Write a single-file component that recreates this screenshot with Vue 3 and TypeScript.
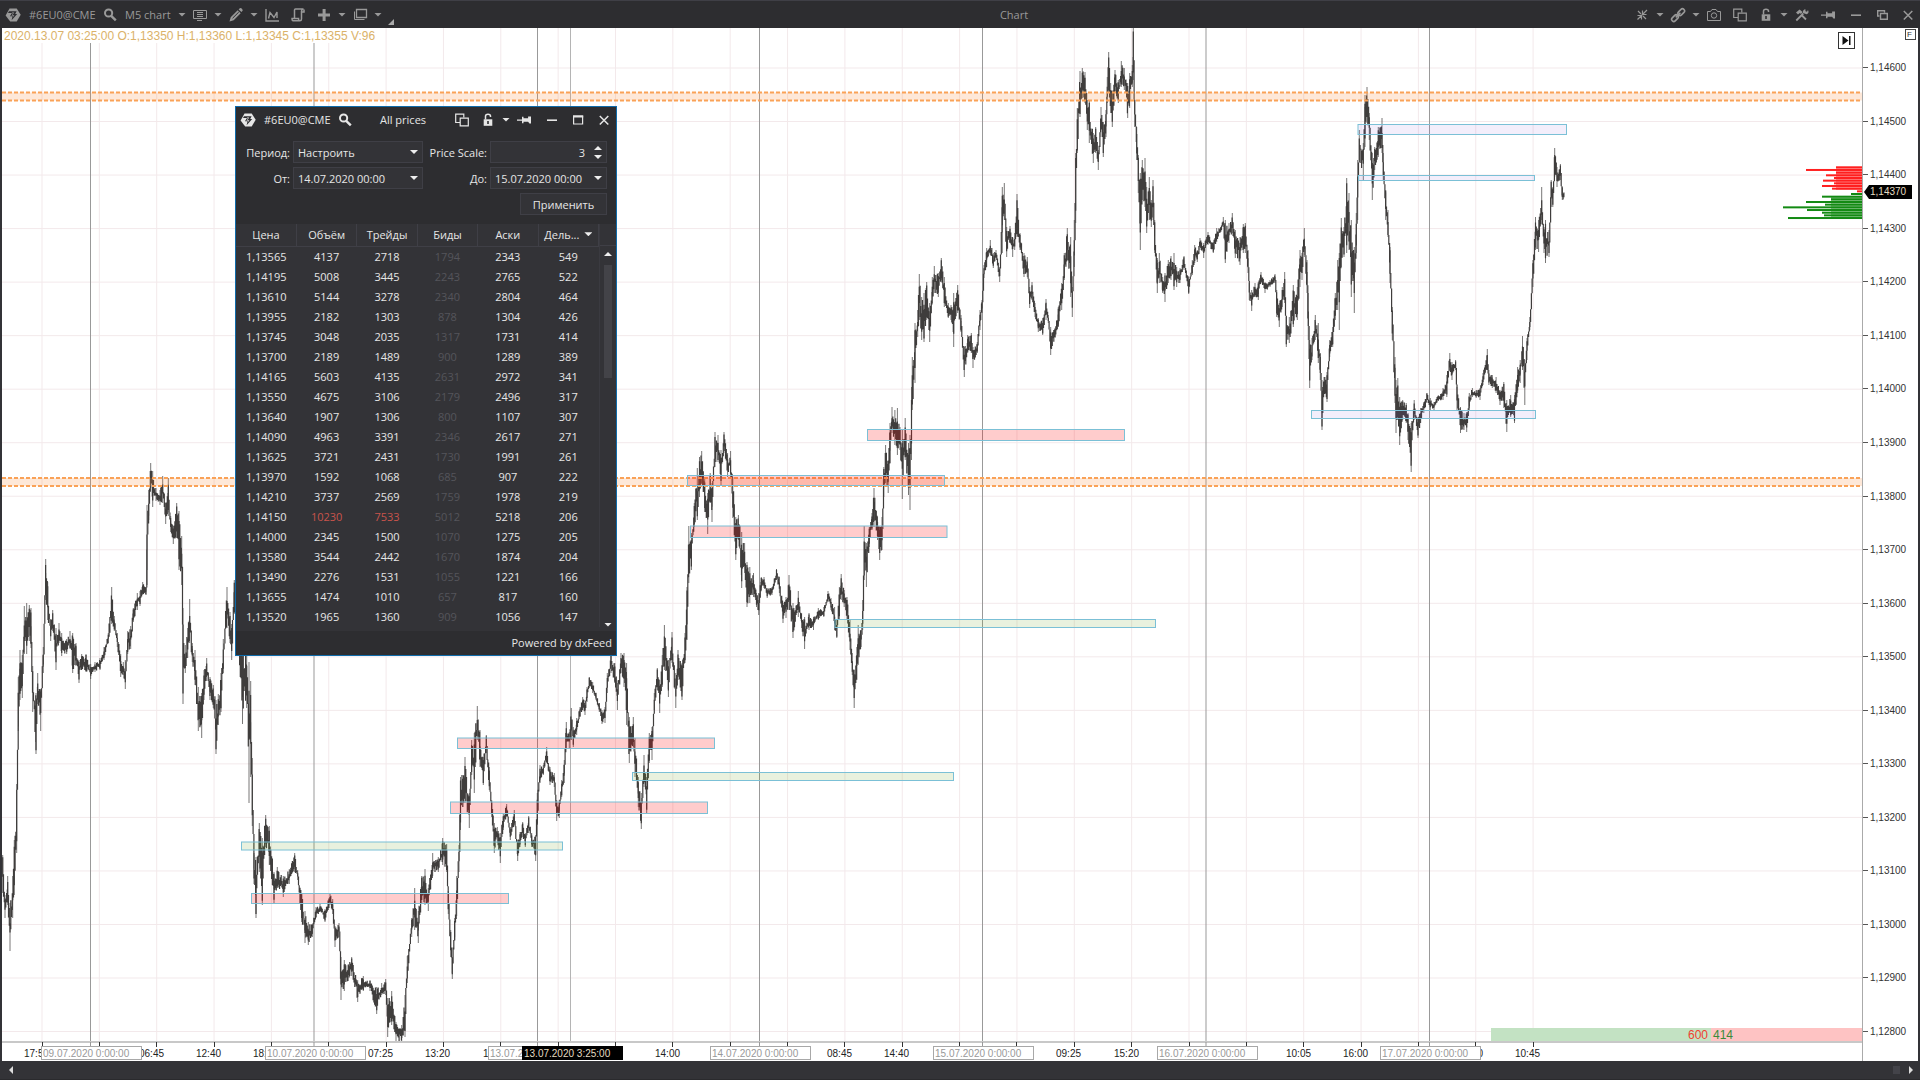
<script setup lang="ts">
import { ref } from 'vue'

type Rect = { x1: number; x2: number; y1: number; y2: number; kind: string }

const glyphs: Record<string, string> = {
  logo: '<path fill="currentColor" d="M4.5 1.5h7.2l4 6.2-4 6.8H5.2L.6 8.4z"/><path fill="#2d2d30" d="M4 4.200h7.600L10.200 7h2l-5.600 6.200.9-4H5L6.900 6H3z"/><path fill="currentColor" d="M7.200 5.400h2L7.400 8.200h2l-1.600 2 .3-1.500H6.400l1.700-2.400H6.600z"/>',
  search: '<circle cx="6.6" cy="6" r="3.6" fill="none" stroke="currentColor" stroke-width="2"/><path d="M9.2 8.8l4.600 4.600" stroke="currentColor" stroke-width="2.400"/>',
  note: '<path fill="none" stroke="currentColor" d="M1.500 3.500h13v8h-13zM5 13.500h5"/><path stroke="currentColor" d="M5 5.500h6M5 7.500h6M5 9.500h6"/>',
  pencil: '<path fill="currentColor" d="M1.500 14.500l1.200-4.200 7-7 3 3-7 7zM10.600 2.400l1.200-1.100q1-.6 1.900.3l.7.8q.7.900 0 1.700l-1 1z"/><path stroke="#2d2d30" d="M4.600 11.200l6.200-6.200"/>',
  indicator: '<path fill="none" stroke="currentColor" stroke-width="1.400" d="M2 2v12h13M4.500 11.500L6 5.500l4 5 3-5.500v6"/>',
  script: '<path fill="none" stroke="currentColor" stroke-width="1.500" d="M4.500 11V3q0-1 1-1h8q-2 .3-2 2v8q0 1.800-1.600 1.800H3q-1.200-.6-1-2.300h6.500q-.2 1.800 1 2.300M11.500 5h2.500V2.500"/>',
  plus: '<path fill="currentColor" d="M6.600 2h3v4.500h4.400v3H9.600V14h-3V9.500H2v-3h4.600z"/>',
  stack: '<path fill="none" stroke="currentColor" stroke-width="1.300" d="M4.500 2.500h10v8h-10z"/><path fill="none" stroke="currentColor" d="M2.500 4.500v8h10"/>',
  collapse: '<path fill="none" stroke="currentColor" stroke-width="1.200" d="M3.500 12.500l9.500-9.500M8.500 3.500v4h4M7.500 12.500v-4h-4M4 4l3 3M9 9l3 3"/>',
  link: '<g fill="none" stroke="currentColor" stroke-width="1.600"><rect x="7.500" y="3" width="7.500" height="4.200" rx="2" transform="rotate(-45 11.250 5.100)"/><rect x="1.200" y="9" width="7.500" height="4.200" rx="2" transform="rotate(-45 5 11.100)"/><path d="M5.800 10.400l4.600-4.600"/></g>',
  camera: '<path fill="none" stroke="currentColor" d="M1.500 4.500h3l1.500-2h4l1.500 2h3v9h-13z"/><circle cx="8" cy="8.500" r="2.700" fill="none" stroke="currentColor"/>',
  copy: '<path fill="none" stroke="currentColor" stroke-width="1.200" d="M6 10.500H1.700V2.200h8.100v3.300"/><path fill="none" stroke="currentColor" stroke-width="1.200" d="M6.200 6.200h8.100v7.600H6.200z"/>',
  lock: '<path fill="currentColor" d="M3.700 7.300h8.600v6.500H3.700z"/><path fill="none" stroke="currentColor" stroke-width="1.500" d="M5.500 7.500V4.200q0-2 2.500-2t2.500 2v.8"/><path stroke="#2d2d30" stroke-width="1.600" d="M8 9v3"/>',
  tools: '<path stroke="currentColor" stroke-width="1.800" d="M2.300 13.500l7-7M12 12.500L7.500 8"/><path fill="currentColor" d="M2 5.500l3.600-3 3 2.500-1.600 2-1.200-1L4 7.600zM9 6q-.6-3 2.300-4l.2 2.300 1.500.4 1-1.700q1.600 3-1.300 4.200z"/>',
  pin: '<path fill="currentColor" d="M1 7.400h5V4.800h1.500v1.400h4.600V4.400H15v7.200h-1.600l-1.300-1.800H7.500v1.400H6V8.700H1z"/>',
  min: '<path stroke="currentColor" stroke-width="1.600" d="M3 8.200h10"/>',
  restore: '<path fill="none" stroke="currentColor" stroke-width="1.400" d="M6.500 6.500h6.800v5.800H6.500z"/><path fill="none" stroke="currentColor" stroke-width="1.400" d="M5.500 9H3.700V3.700h6.800v2"/>',
  max: '<path fill="none" stroke="currentColor" stroke-width="1.200" d="M3.600 4h9v8h-9z"/><path stroke="currentColor" stroke-width="2" d="M3 4.500h10.200"/>',
  close: '<path stroke="currentColor" stroke-width="1.500" d="M3.800 4l8.500 8.500M12.300 4l-8.500 8.500"/>',
}

const leftTools = ['caret', 'note', 'caret', 'pencil', 'caret', 'indicator', 'script', 'plus', 'caret', 'stack', 'caret']
const rightTools = ['collapse', 'caret', 'link', 'caret', 'camera', 'copy', 'lock', 'caret', 'tools', 'pin', 'min', 'restore', 'close']
const dialogTools = ['copy', 'lock', 'caret', 'pin', 'min', 'max', 'close']

const prices = Array.from({ length: 19 }, (_, i) => '1,' + (14600 - i * 100))
const gridY = prices.map((_, i) => 68 + i * 53.53)
const gridX = Array.from({ length: 27 }, (_, i) => 42 + i * 57.35)
const days = [
  { x: 90.5, text: '09.07.2020 0:00:00' },
  { x: 314, text: '10.07.2020 0:00:00' },
  { x: 537.5, text: '13.07.2020 0:00:00' },
  { x: 759.5, text: '14.07.2020 0:00:00' },
  { x: 982.5, text: '15.07.2020 0:00:00' },
  { x: 1206, text: '16.07.2020 0:00:00' },
  { x: 1429.5, text: '17.07.2020 0:00:00' },
]
const hours = [
  { x: 42, text: '17:50' }, { x: 157, text: '06:45' }, { x: 214, text: '12:40' }, { x: 271, text: '18:35' },
  { x: 386, text: '07:25' }, { x: 443, text: '13:20' }, { x: 501, text: '19:15' }, { x: 673, text: '14:00' },
  { x: 845, text: '08:45' }, { x: 902, text: '14:40' }, { x: 1074, text: '09:25' }, { x: 1132, text: '15:20' },
  { x: 1304, text: '10:05' }, { x: 1361, text: '16:00' }, { x: 1476, text: '04:50' }, { x: 1533, text: '10:45' },
]
const at = (x: number) => ({ left: ((x - 2) / 18.6).toFixed(3) + '%' })

const zones: Rect[] = [
  { x1: 457.5, x2: 714.5, y1: 738, y2: 748.5, kind: 'red' },
  { x1: 450.5, x2: 707.5, y1: 802, y2: 813.5, kind: 'red' },
  { x1: 251.5, x2: 508.5, y1: 893.5, y2: 903.5, kind: 'red' },
  { x1: 867.5, x2: 1124.5, y1: 429.5, y2: 440.5, kind: 'red' },
  { x1: 687.5, x2: 944.5, y1: 475.5, y2: 485.5, kind: 'red' },
  { x1: 690.5, x2: 947, y1: 526, y2: 537.5, kind: 'red' },
  { x1: 241.5, x2: 562.5, y1: 842, y2: 850, kind: 'green' },
  { x1: 632.5, x2: 953.5, y1: 772.5, y2: 780.5, kind: 'green' },
  { x1: 835, x2: 1155.5, y1: 619.5, y2: 627.5, kind: 'green' },
  { x1: 1358, x2: 1566.5, y1: 124.5, y2: 134.5, kind: 'violet' },
  { x1: 1358.5, x2: 1534.5, y1: 175.5, y2: 180.5, kind: 'violet' },
  { x1: 1311.5, x2: 1535.5, y1: 410.5, y2: 418.5, kind: 'violet' },
]
const bands = [{ y1: 92.5, y2: 100.5 }, { y1: 478, y2: 486 }]

// Order book depth: left end of every level, from the top ask to the lowest bid.
const asks = [1836, 1806, 1836, 1826, 1834, 1823, 1834, 1822, 1832, 1857]
const bids = [1851, 1822, 1831, 1806, 1825, 1783, 1807, 1822, 1824, 1788]
const depth = [...asks, ...bids].map((x, i) => ({ x, y: 166.3 + i * 2.67, ask: i < 10 }))

// Price range samples: x, high, low.
const samples = `
2.7,855,893 5,895,918 7.7,876,905 10,903,951 12.7,876,918 14.3,840,895 16.7,784,853 18.3,677,731 20,650,700 22.3,655,698
24.3,606,654 26.7,603,654 29.3,605,641 31,608,648 32.7,666,712 36,693,754 37.7,673,704 40.7,689,731 43.3,647,673 45.7,559,600
47.7,582,620 50.7,620,641 52.7,610,631 56,628,670 59,623,643 61.7,633,656 66.7,639,654 70,631,649 72.7,633,673 76,643,666
79,660,683 81.7,654,670 86,654,672 90.7,664,679 95,662,672 100,658,670 104,647,660 108.3,633,643 111.7,587,624 114.3,616,631
117.3,633,647 120.7,654,677 123.3,662,675 125.3,660,689 127.7,631,654 130.7,626,649 133.3,608,622 137.3,593,610 140,591,606 142.7,582,595
146,587,595 147,505,585 148.7,490,520 150.7,463,488 152.7,471,507 156,488,501 160,490,505 162.7,476,503 165.7,503,524 168.3,478,516
170.7,516,532 173.3,526,544 176.7,503,538 179,511,570 181.7,536,585 183,608,704 185.3,645,673 187.7,628,658 189.7,599,643 192.3,643,662
195,650,685 198.3,687,731 201.7,693,738 204,670,700 206.7,658,681 210,677,700 213.3,685,708 216,700,754 218.3,694,725 221,673,712
223.3,639,673 227,587,628 230,612,643 231.7,624,660 234.3,580,612 238,590,640 242.5,640,724 246.7,648,708 249,662,803 250.7,681,777
252.3,758,826 254,853,884 256,857,918 259.3,823,872 262.3,838,905 265.7,815,847 269.3,826,865 274,872,903 277.3,867,888 283.3,876,897
289.3,869,884 294.7,853,872 297.7,870,880 301.7,893,922 305,911,943 308.3,922,945 312.3,924,937 316,907,918 320,904,912 325,909,922
330,893,905 332.7,899,914 335,926,947 339,923,937 341,957,1000 344.3,960,991 348.3,964,981 351.7,957,976 357.7,980,1002 363.3,976,991
370,980,991 376.7,987,1014 381.7,983,995 385.7,979,995 387.7,998,1037 391.7,991,1025 396,1022,1042 401.7,1025,1042 405,995,1037 407.3,956,983
411.7,918,937 414.7,888,930 418.3,911,943 421.7,876,903 425,869,905 428.3,888,911 432.7,853,876 438.3,857,872 442.7,838,865 446.7,844,872
448.3,891,914 450.7,930,957 452.3,957,979 454.7,918,941 456.7,876,916 459,845,872 460.5,777,830 465,757,803 469.3,793,828 471.7,740,775
474.3,733,793 477.3,706,740 480,730,767 483.3,757,785 486.3,735,753 489.3,767,790 491.7,800,817 494.3,823,853 497.3,827,843 500.3,833,863
503.3,813,830 506.7,804,817 510.3,827,840 514.3,810,825 517.7,840,861 520,832,847 522.7,822,837 525.3,833,847 528.7,816,833 531.7,833,847
535.7,835,861 537.3,793,825 540,765,783 543.3,765,775 546.7,747,763 550,767,785 554.3,773,787 556.7,800,821 559.3,800,818 561.7,780,797
564.3,760,783 566.3,722,748 569.3,732,748 571.3,708,740 573.3,727,747 576.7,718,735 580,707,717 582.7,697,710 585,700,715 587,687,702
589.3,677,688 592.7,682,693 596,693,700 599.3,703,712 602,710,724 605,707,723 607.3,673,693 611,653,673 614.8,663,683 617.4,683,710
621,653,673 624,653,687 626.6,663,725 629.3,717,763 633.3,717,747 635,738,777 638.3,777,807 641.3,793,829 644,755,787 646.7,777,813
649.3,733,763 652,727,760 654.3,693,710 657.3,668,690 659.7,680,713 662.3,655,687 664.4,625,670 668.4,660,697 672,632,663 675.8,673,708
678,650,680 682,663,700 685,633,663 687,587,640 688.8,526,583 691.4,533,570 694.3,503,527 697.3,468,520 699.5,457,497 701.7,451,483
704.7,477,512 707.7,493,534 710.2,473,503 712,483,522 715,432,467 718,435,462 721,450,485 724,432,453 727.6,453,477 730.6,451,477
732.8,477,518 735.8,517,560 738.4,515,540 741.7,532,588 744.6,543,573 747,562,607 749.8,567,603 753.5,573,597 756.5,593,607 758.7,593,615
761.3,577,590 764,577,588 767.2,588,598 772,587,595 776.5,569,580 779.4,577,593 783,603,623 786,597,618 789,575,610 793,603,638
798.3,591,617 801.6,613,628 804.6,617,649 809,613,630 813.5,617,630 818.3,608,620 823.8,607,617 828,591,602 831,598,610 834.6,607,630
836.8,620,638 839.4,587,620 841.2,574,600 844.2,590,607 847,597,620 850,620,650 852.3,653,675 854.2,670,708 856.8,647,680 858.2,625,665
861.2,630,647 862.7,600,630 864.2,526,580 866.4,543,587 869.3,527,547 872,513,530 874,488,527 877.5,517,540 879.7,527,560 882,517,550
883.8,467,497 885.6,445,483 888.2,460,493 890,423,463 892,407,433 894.9,410,445 897.4,408,455 900,427,450 902.3,430,499 905.2,418,460
908.5,443,495 910,435,510 911.5,387,460 912.3,357,410 915,323,383 917.7,310,337 919.3,274,320 921.7,297,340 924,293,342 926.7,282,320
929.7,303,342 932.3,277,303 934.3,266,293 938.3,273,297 941.3,258,280 944.3,277,307 948.3,303,318 951,305,320 953.7,293,347 957.7,285,313
961,315,332 964.3,347,377 967.7,335,353 971.3,333,353 973,347,368 977.3,342,353 980,310,330 982,300,313 984,265,278 986.7,248,267
990.3,240,255 993.3,253,268 996,250,258 999.7,267,282 1002.3,187,253 1004.3,183,220 1006.7,227,257 1010,226,243 1012.7,237,257 1014.7,233,250
1017,194,237 1020,233,250 1024,253,277 1027.3,257,277 1029.7,287,308 1032,282,300 1035,303,317 1038.3,318,332 1042.7,318,335 1046,299,320
1048.3,315,323 1050.7,327,355 1055,328,338 1058.3,307,327 1061.7,283,310 1064.3,253,280 1067.3,228,260 1070.7,237,297 1072.3,287,317 1074.3,220,267
1075.7,153,223 1077.3,108,153 1080,71,117 1082.3,68,98 1085,72,103 1087.3,100,130 1089.3,100,143 1093.3,133,163 1095.7,127,153 1098.3,150,170
1101,107,137 1103.3,122,157 1106,110,137 1107.3,77,103 1108.7,52,93 1110.7,83,113 1112.3,93,127 1115,70,93 1118.3,80,103 1121.3,61,87
1124.3,68,90 1127.7,83,118 1129.7,73,108 1132.3,65,87 1133.3,28,80 1134.7,100,127 1136.7,127,160 1138.3,155,193 1140.3,173,250 1142.3,160,200
1145,158,207 1146.7,187,233 1149.3,177,220 1151.3,200,227 1153,180,220 1154.7,220,253 1157.3,260,293 1159.3,253,283 1162.7,277,293 1165,273,302
1168.3,260,283 1171,256,280 1174,253,290 1176.7,267,287 1180,268,283 1184,256,270 1188.7,277,294 1192.3,260,275 1194.7,245,263 1197.3,250,262
1200,238,250 1203.7,243,258 1208,232,245 1213.3,242,253 1216.7,228,242 1220.7,227,232 1223.3,217,227 1225.3,220,263 1229,223,243 1232.3,213,233
1235.3,230,258 1240,237,265 1243.3,224,253 1245.3,223,253 1248,250,273 1249.3,283,300 1251.7,290,311 1255,283,297 1258.3,282,300 1261,272,283
1265,282,293 1270,280,287 1275,274,283 1276.7,290,317 1279.3,303,327 1282.3,287,307 1284.7,272,303 1286.3,317,347 1289.3,317,343 1293.3,285,327
1297.3,287,320 1300,250,287 1302,253,280 1304.3,228,257 1307,260,293 1308.3,293,340 1309.7,340,388 1312,338,360 1315.3,315,340 1318.3,323,363
1320.3,353,380 1322,380,430 1324,377,393 1327,372,402 1329.7,340,357 1332.7,327,347 1335.3,293,320 1337.7,260,310 1339.3,253,330 1341.3,218,267
1344,227,257 1346.7,178,253 1349,193,250 1351.3,220,297 1354.3,247,313 1356.3,213,253 1357.7,160,220 1359.3,130,160 1363.3,143,180 1365,95,147
1367,87,123 1369.3,113,140 1372.3,153,200 1374.7,147,170 1378.3,127,157 1382,118,153 1383.3,153,180 1385.7,190,220 1388,210,237 1390,247,283
1392.3,307,340 1395,357,403 1396,380,433 1397.8,378,420 1399.7,397,445 1402.7,400,420 1406.2,403,423 1408,413,440 1411.2,423,472 1414.2,400,420
1418,417,438 1420.7,408,423 1423.8,402,413 1426.9,393,403 1430.3,398,410 1434,402,410 1436.8,397,403 1443,388,400 1446.8,375,397 1449.8,353,370
1452,362,380 1455.6,360,370 1457,387,410 1460.5,407,433 1464,413,430 1466.7,412,432 1469.3,393,410 1472.4,388,397 1476.2,390,398 1480,388,400
1483,373,385 1487.3,349,370 1488.9,370,385 1492.3,375,388 1496.1,377,393 1500,390,405 1503.8,382,408 1506.8,400,432 1510.7,395,417 1514.5,395,423
1517.6,367,393 1520.2,360,383 1522.5,336,370 1524.8,360,405 1527,338,360 1529.8,317,330 1532.9,260,287 1535.5,217,250 1538.6,220,252 1541.7,187,220
1544,227,253 1545.5,220,263 1549,230,257 1551.2,180,207 1552.8,187,207 1554.7,148,177 1557,167,187 1560.4,164,180 1562.3,187,200 1564.6,186,204`
  .trim().split(/\s+/).map(s => s.split(',').map(Number))

let seed = 7
const rand = () => (seed = (seed * 16807) % 2147483647) / 2147483647

// One bar per five minutes between samples; every bar touches its neighbour.
function buildBars() {
  let wicks = ''
  let bodies = ''
  let prevTop = samples[0][1]
  let prevBottom = samples[0][2]
  for (let i = 0; i < samples.length - 1; i++) {
    const [x0, t0, b0] = samples[i]
    const [x1, t1, b1] = samples[i + 1]
    wicks += `M${x0} ${t0}V${b0}`
    for (let x = x0; x < x1; x += 0.775) {
      const k = (x - x0) / (x1 - x0)
      const t = t0 + (t1 - t0) * k
      const b = b0 + (b1 - b0) * k
      const h = b - t
      let top = t + h * (0.06 + rand() * 0.4)
      let bottom = b - h * (0.06 + rand() * 0.4)
      if (bottom < top + 3) bottom = top + 3
      if (top > prevBottom) top = prevBottom
      if (bottom < prevTop) bottom = prevTop
      bodies += `M${x.toFixed(1)} ${top.toFixed(1)}V${bottom.toFixed(1)}`
      prevTop = top
      prevBottom = bottom
    }
  }
  return { wicks, bodies }
}
const bars = buildBars()

const columns = ['Цена', 'Объём', 'Трейды', 'Биды', 'Аски', 'Дель...']
const rows = `1,13565 4137 2718 1794 2343 549
1,14195 5008 3445 2243 2765 522
1,13610 5144 3278 2340 2804 464
1,13955 2182 1303 878 1304 426
1,13745 3048 2035 1317 1731 414
1,13700 2189 1489 900 1289 389
1,14165 5603 4135 2631 2972 341
1,13550 4675 3106 2179 2496 317
1,13640 1907 1306 800 1107 307
1,14090 4963 3391 2346 2617 271
1,13625 3721 2431 1730 1991 261
1,13970 1592 1068 685 907 222
1,14210 3737 2569 1759 1978 219
1,14150 10230 7533 5012 5218 206
1,14000 2345 1500 1070 1275 205
1,13580 3544 2442 1670 1874 204
1,13490 2276 1531 1055 1221 166
1,13655 1474 1010 657 817 160
1,13520 1965 1360 909 1056 147`.split('\n').map(r => r.split(' '))

const scale = ref(3)
</script>

<template>
  <div class="app">
    <header class="bar main-bar">
      <svg class="icon" viewBox="0 0 16 16" v-html="glyphs.logo" />
      <span class="symbol">#6EU0@CME</span>
      <button class="tool find" aria-label="search"><svg class="icon" viewBox="0 0 16 16" v-html="glyphs.search" /></button>
      <span class="frame">M5 chart</span>
      <button v-for="(t, i) in leftTools" :key="i" :class="['tool', t]" :aria-label="t">
        <svg v-if="t !== 'caret'" class="icon" viewBox="0 0 16 16" v-html="glyphs[t]" />
      </button>
      <i class="corner"></i>
      <h1 class="title">Chart</h1>
      <button v-for="(t, i) in rightTools" :key="i" :class="['tool', t]" :aria-label="t">
        <svg v-if="t !== 'caret'" class="icon" viewBox="0 0 16 16" v-html="glyphs[t]" />
      </button>
    </header>

    <main class="chart">
      <div class="left">
        <div class="plot">
          <svg class="canvas" viewBox="2 28 1860 1014" preserveAspectRatio="none">
            <line v-for="y in gridY" :key="'y' + y" class="grid" x1="2" x2="1862" :y1="y" :y2="y" />
            <line v-for="x in gridX" :key="'x' + x" class="grid" :x1="x" :x2="x" y1="28" y2="1042" />
            <line v-for="d in days" :key="d.x" class="day" :x1="d.x" :x2="d.x" y1="28" y2="1042" />
            <line class="cross" x1="570.5" x2="570.5" y1="28" y2="1042" />
            <path class="wick" :d="bars.wicks" />
            <path class="body" :d="bars.bodies" />
            <g v-for="b in bands" :key="b.y1" class="band">
              <rect x="2" width="1860" :y="b.y1" :height="b.y2 - b.y1" />
              <path :d="`M2 ${b.y1}H1862M2 ${b.y2}H1862`" />
            </g>
            <rect v-for="z in zones" :key="z.y1" :class="['zone', z.kind]" :x="z.x1" :y="z.y1" :width="z.x2 - z.x1" :height="z.y2 - z.y1" />
            <rect v-for="d in depth" :key="d.y" :class="d.ask ? 'ask' : 'bid'" :x="d.x" :y="d.y" :width="1862 - d.x" height="2" />
            <rect class="ask soft" x="1836" y="167" width="26" height="23" />
            <rect class="bid soft" x="1831" y="197" width="31" height="22" />
          </svg>
          <p class="ohlc">2020.13.07 03:25:00 O:1,13350 H:1,13360 L:1,13345 C:1,13355 V:96</p>
          <button class="jump" aria-label="to last bar">
            <svg viewBox="0 0 15 15"><path fill="#111" d="M3.500 3l6 4.500-6 4.500zM10 3h1.500v9H10z" /></svg>
          </button>
          <div class="volume"><span class="sell">600</span><span class="buy">414</span></div>
        </div>
        <div class="time">
          <svg class="ticks" viewBox="2 1042 1860 19" preserveAspectRatio="none">
            <line v-for="x in gridX" :key="x" :x1="Math.floor(x) + 0.5" :x2="Math.floor(x) + 0.5" y1="1042" y2="1047" />
            <line v-for="d in days" :key="d.x" class="day" :x1="d.x" :x2="d.x" y1="1042" y2="1047" />
          </svg>
          <span v-for="h in hours" :key="h.x" class="hour" :style="at(h.x - 18)">{{ h.text }}</span>
          <span v-for="d in days" :key="d.x" class="date" :style="at(Math.floor(d.x) - 49)">{{ d.text }}</span>
          <span class="date now" :style="at(522)">13.07.2020 3:25:00</span>
        </div>
      </div>
      <aside class="price">
        <span v-for="p in prices" :key="p" class="level">{{ p }}</span>
        <button class="fix">F</button>
        <span class="last">1,14370</span>
      </aside>
    </main>

    <footer class="scroll">
      <button class="arrow-left" aria-label="scroll left"></button>
      <span class="thumb"></span>
      <button class="arrow-right" aria-label="scroll right"></button>
    </footer>

    <section class="dialog">
      <header class="bar dialog-bar">
        <svg class="icon" viewBox="0 0 16 16" v-html="glyphs.logo" />
        <span class="symbol">#6EU0@CME</span>
        <button class="tool find" aria-label="search"><svg class="icon" viewBox="0 0 16 16" v-html="glyphs.search" /></button>
        <h2 class="dialog-title">All prices</h2>
        <button v-for="(t, i) in dialogTools" :key="i" :class="['tool', t]" :aria-label="t">
          <svg v-if="t !== 'caret'" class="icon" viewBox="0 0 16 16" v-html="glyphs[t]" />
        </button>
      </header>
      <form class="form" @submit.prevent>
        <label for="period">Период:</label>
        <div class="combo"><select id="period"><option>Настроить</option></select></div>
        <label for="scale">Price Scale:</label>
        <div class="spin">
          <input id="scale" v-model="scale" type="number" />
          <button type="button" class="up" aria-label="up" @click="scale++"></button>
          <button type="button" class="down" aria-label="down" @click="scale--"></button>
        </div>
        <label for="from">От:</label>
        <div class="combo"><select id="from"><option>14.07.2020 00:00</option></select></div>
        <label for="to">До:</label>
        <div class="combo"><select id="to"><option>15.07.2020 00:00</option></select></div>
        <button class="apply">Применить</button>
      </form>
      <div class="data">
        <table>
          <thead>
            <tr><th v-for="(c, i) in columns" :key="c">{{ c }}<i v-if="i === 5" class="sort"></i></th></tr>
          </thead>
          <tbody>
            <tr v-for="r in rows" :key="r[0]">
              <td v-for="(c, i) in r" :key="i" :class="{ dim: i === 3, hot: r[1] === '10230' && (i === 1 || i === 2) }">{{ c }}</td>
            </tr>
          </tbody>
        </table>
        <div class="vscroll">
          <span class="vhead"></span>
          <button class="up" aria-label="scroll up"></button>
          <span class="vthumb"></span>
          <button class="down" aria-label="scroll down"></button>
        </div>
      </div>
      <p class="powered">Powered by dxFeed</p>
    </section>
  </div>
</template>

<style>
body { background: #2d2d30; }
</style>

<style scoped>
* { box-sizing: border-box; margin: 0; }
.app {
  position: relative;
  display: flex;
  flex-direction: column;
  min-height: 100vh;
  background: #333337;
  color: #e6e6e6;
  font-family: "Open Sans", "Noto Sans", sans-serif;
  font-size: 11px;
}
button { padding: 0; border: 0; background: none; color: inherit; font: inherit; }
.bar { display: flex; align-items: center; padding: 0 4px; }
.icon { display: block; width: 16px; height: 16px; flex: none; }
.tool { flex: none; width: 16px; height: 16px; margin-left: 10px; }
.tool.caret { width: 8px; height: 4px; margin: 0 -4px 0 6px; background: currentColor; clip-path: polygon(0 0, 100% 0, 50% 100%); }
.tool.min { margin-left: 12px; }
.tool.find { margin-left: 3px; }
.symbol { margin-left: 8px; width: 70px; white-space: nowrap; }
.main-bar { height: 28px; padding-left: 5px; background: #2d2d30; border-top: 1px solid #3f3f46; color: #999; }
.frame { margin-left: 7px; width: 47px; white-space: nowrap; }
.corner { width: 6px; height: 6px; margin: 15px 0 0 10px; background: #aaa; clip-path: polygon(100% 0, 100% 100%, 0 100%); }
.title { flex: 1; padding-left: 10px; text-align: center; font-size: 11px; font-weight: 400; }

.chart { flex: 1; display: flex; margin: 0 2px; background: #fff; color: #333; font-family: "Liberation Sans", Arial, sans-serif; font-size: 10px; }
.left { flex: 1; display: flex; flex-direction: column; min-width: 0; }
.plot { position: relative; flex: 1; }
.canvas { position: absolute; inset: 0; width: 100%; height: 100%; }
.grid { stroke: #f3e9eb; stroke-width: 1; }
.day { stroke: #999; stroke-width: 1; }
.cross { stroke: #b4b4b4; stroke-width: 1; }
.wick { fill: none; stroke: #3f3d3c; stroke-opacity: 0.7; stroke-width: 1; }
.body { fill: none; stroke: #3f3d3c; stroke-width: 1.2; }
.band rect { fill: #fa8c3c; fill-opacity: 0.2; }
.band path { stroke: #faa257; stroke-width: 2; stroke-dasharray: 4 2; }
.zone { stroke: #7bc0d6; stroke-width: 1; }
.red { fill: rgba(255, 0, 0, 0.2); }
.green { fill: rgba(120, 170, 50, 0.16); }
.violet { fill: rgba(140, 90, 220, 0.1); }
.ask { fill: #ff2020; }
.bid { fill: #138a13; }
.soft { fill-opacity: 0.45; }
.ohlc { position: absolute; top: 0; left: 0; height: 15px; padding: 0 4px 0 2px; background: #fff; color: #dbb269; font-size: 12px; line-height: 16px; white-space: nowrap; }
.jump { position: absolute; top: 4px; right: 7px; width: 17px; height: 17px; background: #fff; border: 1px solid #333; }
.jump svg { display: block; width: 15px; height: 15px; }
.volume { position: absolute; right: 0; bottom: 0; display: flex; width: 371px; height: 14px; font-size: 12px; line-height: 15px; }
.sell { width: 220px; padding-right: 3px; background: #c3e2c3; color: #f04030; text-align: right; }
.buy { flex: 1; padding-left: 2px; background: #fec3c3; color: #3a8a3a; }
.time { position: relative; height: 19px; }
.time::before { content: ""; position: absolute; top: -1px; left: 0; right: 0; height: 2px; background: #c8c8c8; }
.ticks { position: absolute; inset: 0; width: 100%; height: 100%; stroke: #333; }
.hour { position: absolute; top: 5px; line-height: 13px; color: #222; }
.date { position: absolute; top: 4px; width: 101px; height: 14px; padding-left: 1px; border: 1px solid #a8a8a8; background: #fff; color: #999; line-height: 13px; white-space: nowrap; }
.now { background: #000; border-color: #000; color: #e4dcc0; }
.price { position: relative; display: flex; flex-direction: column; width: 56px; padding: 13px 0 3px; border-left: 1px solid #aaa; }
.level { flex: 1; display: flex; align-items: center; gap: 2px; }
.level::before { content: ""; width: 5px; height: 1px; background: #555; }
.fix { position: absolute; top: 1px; right: 2px; width: 11px; height: 11px; border: 1px solid #444; font-size: 8px; line-height: 8px; text-align: left; padding-left: 1px; }
.last { position: absolute; top: 157px; left: 1px; width: 48px; height: 14px; padding-left: 6px; background: #000; color: #e4dcc0; line-height: 14px; clip-path: polygon(0 50%, 5px 0, 100% 0, 100% 100%, 5px 100%); }

.scroll { display: flex; align-items: center; height: 19px; padding: 0 7px 0 9px; border-bottom: 1px solid #2a2a2d; }
.arrow-left, .arrow-right { width: 4px; height: 8px; background: #ddd; clip-path: polygon(100% 0, 100% 100%, 0 50%); }
.arrow-right { margin-left: 9px; clip-path: polygon(0 0, 100% 50%, 0 100%); }
.thumb { width: 7px; height: 8px; margin-left: auto; background: #434349; }

.dialog { position: absolute; top: 106px; left: 235px; width: 382px; background: #2d2d30; border: 1px solid #0f6cab; }
.dialog-bar { height: 25px; color: #e6e6e6; }
.dialog-title { flex: 1; margin-left: 27px; font-size: 11px; font-weight: 400; }
.form { display: grid; grid-template-columns: 54px 130px 1fr 117px; grid-auto-rows: 22px; gap: 4px 3px; align-items: center; padding: 9px 9px 9px 0; }
.form label { text-align: right; white-space: nowrap; }
.combo, .spin { position: relative; height: 22px; background: #333337; border: 1px solid #3f3f46; }
select, input { display: block; width: 100%; height: 20px; padding: 0 0 0 4px; border: 0; appearance: none; background: none; color: #e6e6e6; font: inherit; }
select option { background: #333337; }
input { padding-right: 21px; text-align: right; appearance: textfield; }
input::-webkit-inner-spin-button { appearance: none; }
.combo::after { content: ""; position: absolute; top: 8px; right: 4px; width: 8px; height: 4px; background: #eee; clip-path: polygon(0 0, 100% 0, 50% 100%); pointer-events: none; }
.up, .down { width: 8px; height: 4px; background: #eee; clip-path: polygon(50% 0, 100% 100%, 0 100%); }
.down { clip-path: polygon(0 0, 100% 0, 50% 100%); }
.spin .up, .spin .down { position: absolute; top: 4px; right: 4px; }
.spin .down { top: 13px; }
.apply { grid-column: 3 / 5; justify-self: end; width: 87px; height: 22px; background: #333337; border: 1px solid #3f3f46; }
.data { display: flex; background: #333337; padding-bottom: 4px; }
table { width: 363px; table-layout: fixed; border-collapse: collapse; }
th, td { padding: 0; text-align: center; font-weight: 400; white-space: nowrap; }
th { height: 22px; border-right: 1px solid #3f3f46; border-bottom: 1px solid #3f3f46; }
td { height: 20px; line-height: 20px; }
.dim { color: #55555b; }
.hot { color: #c9544c; }
.sort { display: inline-block; width: 8px; height: 4px; margin: 0 0 3px 5px; background: #eee; clip-path: polygon(0 0, 100% 0, 50% 100%); }
.vscroll { display: flex; flex-direction: column; align-items: center; width: 17px; border-left: 1px solid #3a3a40; }
.vhead { width: 100%; height: 22px; border-bottom: 1px solid #3f3f46; margin-bottom: 6px; }
.vthumb { width: 8px; height: 113px; margin: 9px 0 auto; background: #434348; }
.powered { height: 24px; padding-right: 4px; line-height: 24px; text-align: right; }
</style>
